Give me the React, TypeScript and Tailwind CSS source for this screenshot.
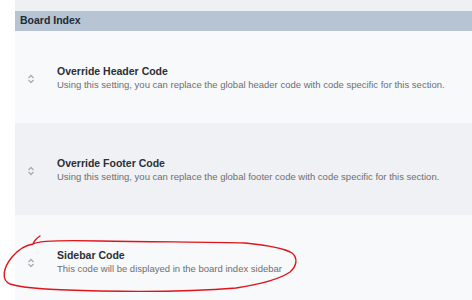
import React from 'react';

const rows = [
  {
    title: 'Override Header Code',
    desc: 'Using this setting, you can replace the global header code with code specific for this section.',
    bg: 'bg-[#f8f9fb]',
  },
  {
    title: 'Override Footer Code',
    desc: 'Using this setting, you can replace the global footer code with code specific for this section.',
    bg: 'bg-[#eff1f4]',
  },
  {
    title: 'Sidebar Code',
    desc: 'This code will be displayed in the board index sidebar',
    bg: 'bg-[#f8f9fb]',
  },
];

function SortIcon() {
  return (
    <svg width="8" height="10" viewBox="0 0 8 10" className="shrink-0">
      <path d="M1.5 4 L4 1.5 L6.5 4" fill="none" stroke="#a8adb3" strokeWidth="1.3" />
      <path d="M1.5 6 L4 8.5 L6.5 6" fill="none" stroke="#a8adb3" strokeWidth="1.3" />
    </svg>
  );
}

export default function App() {
  return (
    <div className="relative w-[472px] h-[300px] overflow-hidden bg-white [font-family:'Liberation_Sans',Arial,sans-serif]">
      <div className="ml-[15px] flex flex-col">
        <div className="h-[11px] bg-[#eef0f3]" />
        <div className="h-[20px] bg-[#b6c4d3] px-[5px] flex items-center text-[10.5px] font-bold text-[#1e2a36]">
          Board Index
        </div>
        {rows.map((r) => (
          <div key={r.title} className={`${r.bg} h-[92px] flex items-center pl-[12px]`}>
            <div className="w-[30px] shrink-0 flex items-center pt-[4px]">
              <SortIcon />
            </div>
            <div className="flex flex-col whitespace-nowrap min-w-0 pt-[2px]">
              <div className="text-[10.5px] font-bold text-[#2b2f36] leading-[13px]">{r.title}</div>
              <div className="text-[9.5px] text-[#6e6e6e] leading-[13px]">{r.desc}</div>
            </div>
          </div>
        ))}
      </div>

      {/* hand-drawn red mark */}
      <svg className="absolute inset-0 pointer-events-none" width="472" height="300" viewBox="0 0 472 300">
        <path
          d="M40 236 C37 238 34 241 33 244 C38 241 60 240 100 241 C160 242 215 242 245 243 C265 245 284 248 292 253 C298 258 297 266 290 272 C280 279 262 284 236 288 C200 291 150 292 100 291 C60 290 25 289 10 284 C1 280 3 268 12 257 C18 250 26 245 33 244"
          fill="none"
          stroke="#e0141a"
          strokeWidth="1.4"
          strokeLinecap="round"
        />
      </svg>
    </div>
  );
}
